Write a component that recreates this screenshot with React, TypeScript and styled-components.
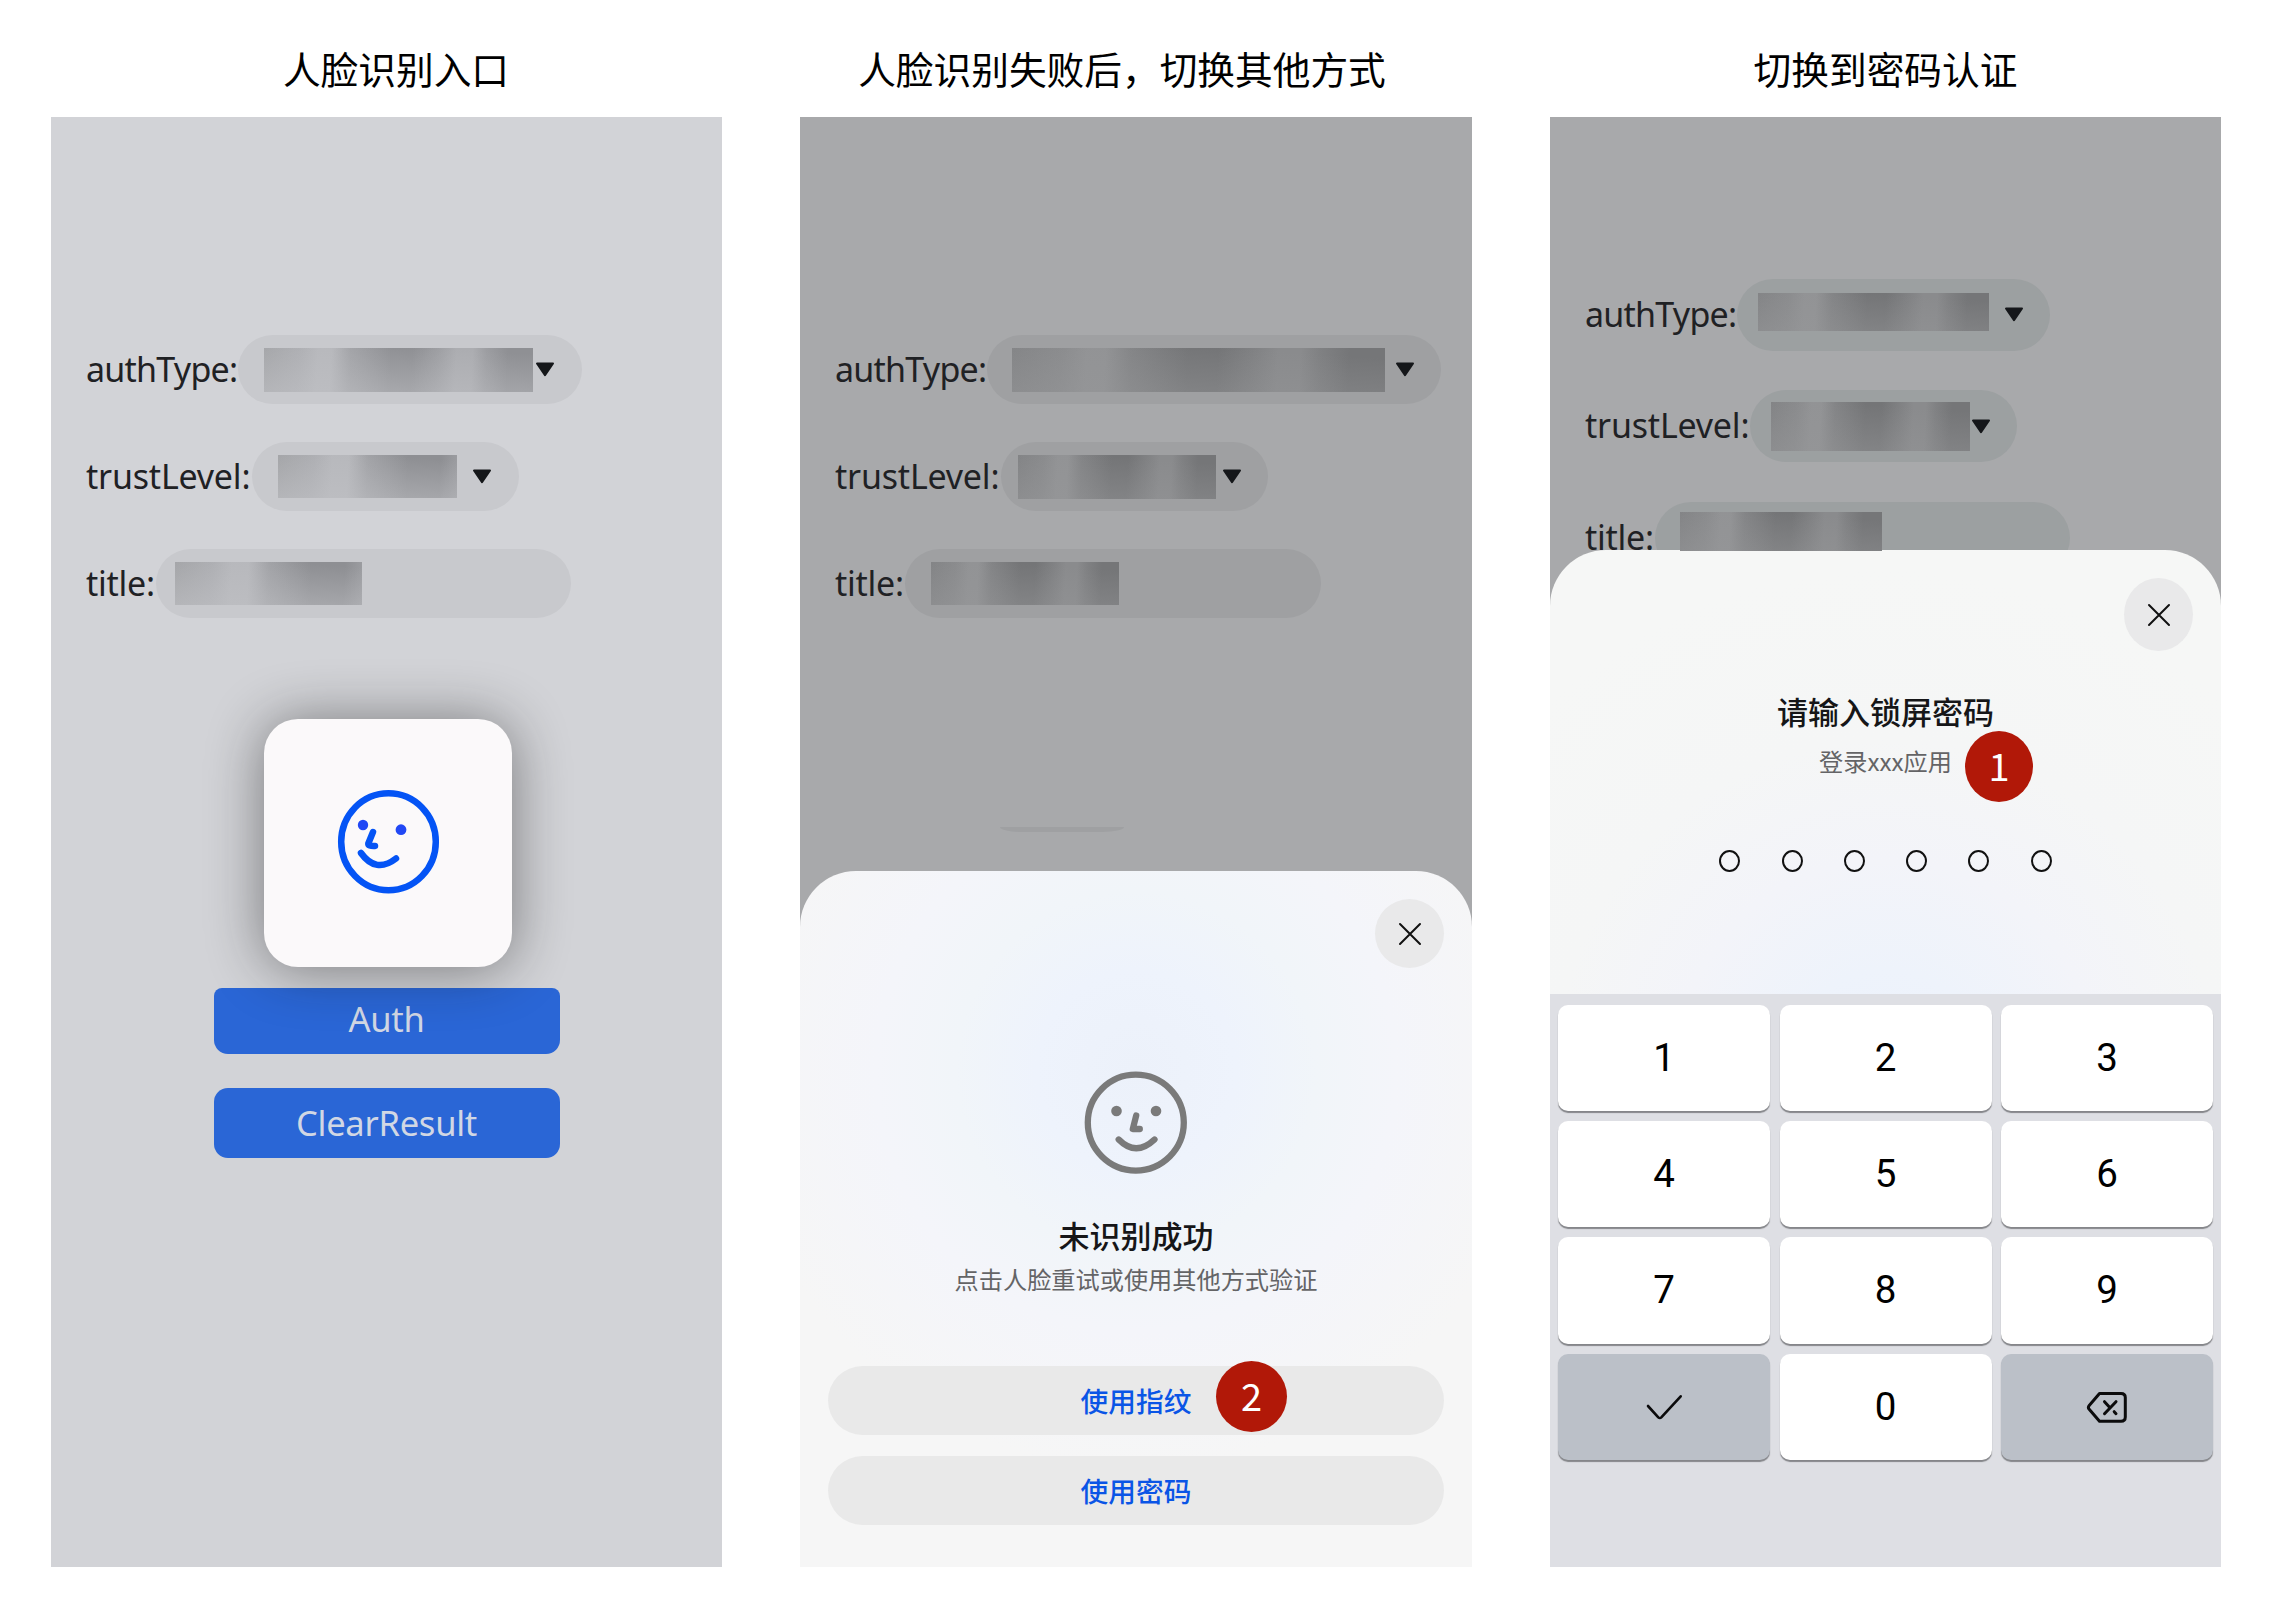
import React from "react";
import styled, { createGlobalStyle } from "styled-components";

const GlobalStyle = createGlobalStyle`
  * { box-sizing: border-box; }
  body { margin: 0; background: #fff; }
`;

const latin = `"Noto Sans", "Noto Sans CJK SC", sans-serif`;
const cjk = `"Noto Sans CJK SC", "Noto Sans", sans-serif`;

const Page = styled.main`
  width: 2283px;
  height: 1613px;
  padding: 0 62px 0 51px;
  display: flex;
  justify-content: space-between;
  background: #fff;
  overflow: hidden;
  font-family: ${latin};
`;

const Column = styled.section<{ $w: number }>`
  width: ${(p) => p.$w}px;
  display: flex;
  flex-direction: column;
`;

const Heading = styled.h2<{ $shift?: number }>`
  margin: 0;
  height: 117px;
  padding-top: 22px;
  padding-left: ${(p) => Math.max(0, p.$shift ?? 0)}px;
  padding-right: ${(p) => Math.max(0, -(p.$shift ?? 0))}px;
  font: 400 37.7px/92px ${cjk};
  color: #000;
  text-align: center;
  white-space: nowrap;
`;

const Phone = styled.div<{ $bg: string }>`
  position: relative;
  width: 100%;
  height: 1450px;
  display: flex;
  flex-direction: column;
  background: ${(p) => p.$bg};
  overflow: hidden;
`;

const Form = styled.div<{ $top: number; $gap: number; $height: number }>`
  height: ${(p) => p.$height}px;
  flex: none;
  padding: ${(p) => p.$top}px 0 0 35px;
  display: flex;
  flex-direction: column;
  gap: ${(p) => p.$gap}px;
`;

const Row = styled.div`
  display: flex;
  align-items: center;
`;

const Label = styled.span<{ $w: number; $ls: number }>`
  flex: none;
  width: ${(p) => p.$w}px;
  padding-bottom: 2px;
  font-size: 34px;
  line-height: 66px;
  letter-spacing: ${(p) => p.$ls}px;
  color: #1f2124;
  white-space: nowrap;
`;

const Pill = styled.div<{ $w: number; $h: number; $pad: number; $bg: string }>`
  flex: none;
  width: ${(p) => p.$w}px;
  height: ${(p) => p.$h}px;
  padding-left: ${(p) => p.$pad}px;
  display: flex;
  align-items: center;
  border-radius: 36px;
  background: ${(p) => p.$bg};
`;

const Mosaic = styled.div<{ $w: number; $h: number; $up: number; $dark: boolean; $wide: boolean }>`
  position: relative;
  z-index: 2;
  flex: none;
  width: ${(p) => p.$w}px;
  height: ${(p) => p.$h}px;
  margin-bottom: ${(p) => p.$up}px;
  background: ${(p) => {
    const shade = p.$dark
      ? "linear-gradient(4deg, rgba(150,151,153,.5), rgba(150,151,153,0) 85%)"
      : "linear-gradient(4deg, rgba(192,193,197,.6), rgba(192,193,197,0) 90%)";
    const c = p.$dark
      ? ["#828385", "#8a8b8d", "#929395", "#838486", "#747577", "#808183", "#8a8b8d", "#757678"]
      : ["#a2a3a6", "#adaeb2", "#b7b8bc", "#a1a2a6", "#8e8f93", "#9d9ea2", "#acadb1", "#8f9094"];
    return p.$wide
      ? `${shade}, linear-gradient(93deg, ${c[0]} 0%, ${c[1]} 13%, ${c[2]} 20%, ${c[2]} 25%, ${c[3]} 32%, ${c[4]} 47%, ${c[4]} 55%, ${c[5]} 64%, ${c[6]} 71%, ${c[6]} 77%, ${c[5]} 82%, ${c[7]} 90%, ${c[7]} 100%)`
      : `${shade}, linear-gradient(93deg, ${c[0]} 0%, ${c[1]} 20%, ${c[2]} 30%, ${c[2]} 39%, ${c[3]} 50%, ${c[4]} 72%, ${c[4]} 90%, ${c[5]} 100%)`;
  }};
`;

const Arrow = styled.svg<{ $gap: number }>`
  flex: none;
  width: 20px;
  height: 15px;
  margin-left: ${(p) => p.$gap}px;
`;

type Field = { label: string; lw: number; ls: number; w: number; pad: number; mw: number; mh: number; up?: number; arrow?: number; wide?: boolean };

function Fields({ items, dark, h, bg }: { items: Field[]; dark: boolean; h: number; bg: string }) {
  return (
    <>
      {items.map((f) => (
        <Row key={f.label}>
          <Label $w={f.lw} $ls={f.ls}>{f.label}</Label>
          <Pill $w={f.w} $h={h} $pad={f.pad} $bg={bg}>
            <Mosaic $w={f.mw} $h={f.mh} $up={f.up ?? 0} $dark={dark} $wide={dark || !!f.wide} />
            {f.arrow !== undefined && (
              <Arrow $gap={f.arrow} viewBox="0 0 20 15">
                <path d="M2 1.5 H18 L10 13.2 Z" fill="#15171a" stroke="#15171a" strokeWidth="2" strokeLinejoin="round" />
              </Arrow>
            )}
          </Pill>
        </Row>
      ))}
    </>
  );
}

const FaceCard = styled.div`
  position: relative;
  z-index: 1;
  flex: none;
  width: 248px;
  height: 248px;
  margin: 0 0 21px 213px;
  display: grid;
  place-items: center;
  border-radius: 34px;
  background: #fbf9fa;
  box-shadow: 0 2px 56px rgba(20, 20, 20, 0.48);
`;

const FaceSvg = styled.svg<{ $mt?: number }>`
  display: block;
  flex: none;
  width: 108px;
  height: 108px;
  margin-top: ${(p) => p.$mt ?? 0}px;
`;

const ActionButton = styled.button<{ $cut?: boolean }>`
  flex: none;
  width: 346px;
  height: ${(p) => (p.$cut ? 66 : 70)}px;
  margin: 0 0 34px 162.5px;
  padding: 0 0 ${(p) => (p.$cut ? 5 : 1)}px;
  border: 0;
  border-radius: ${(p) => (p.$cut ? "8px 8px 14px 14px" : "14px")};
  background: #2a66d6;
  color: #d1d7e4;
  font: 400 34.5px/60px ${latin};
  letter-spacing: -0.25px;
`;

const Sheet = styled.div<{ $bg: string }>`
  position: relative;
  flex: 1;
  display: flex;
  flex-direction: column;
  align-items: center;
  border-radius: 56px 56px 0 0;
  background: ${(p) => p.$bg};
`;

const Close = styled.button<{ $h: number; $top: number; $right: number }>`
  flex: none;
  align-self: flex-end;
  width: 69px;
  height: ${(p) => p.$h}px;
  margin: ${(p) => p.$top}px ${(p) => p.$right}px 0 0;
  padding: 0;
  display: grid;
  place-items: center;
  border: 0;
  border-radius: 50%;
  background: #e9e9ea;
`;

const CloseIcon = () => (
  <svg width="24" height="24" viewBox="0 0 24 24" fill="none" stroke="#111" strokeWidth="2" strokeLinecap="round">
    <path d="M2 2 L22 22 M22 2 L2 22" />
  </svg>
);

const Title = styled.h3<{ $mt: number }>`
  margin: ${(p) => p.$mt}px 0 0;
  font: 500 31px/44px ${cjk};
  color: #161618;
  white-space: nowrap;
`;

const Sub = styled.p<{ $mt: number }>`
  margin: ${(p) => p.$mt}px 0 0;
  font: 400 24.2px/36px ${cjk};
  color: #646466;
  white-space: nowrap;
`;

const Remnant = styled.div`
  width: 124px;
  height: 5px;
  margin-top: auto;
  margin-bottom: 39px;
  margin-left: 165px;
  border-radius: 0 0 22px 22px / 0 0 5px 5px;
  background: #9fa0a2;
`;

const Option = styled.button<{ $mt: number }>`
  position: relative;
  flex: none;
  width: 616px;
  height: 69px;
  margin: ${(p) => p.$mt}px 0 0;
  padding: 0 0 2px;
  border: 0;
  border-radius: 35px;
  background: #e9e9e9;
  color: #0a55e6;
  font: 500 27.7px/64px ${cjk};
`;

const Badge = styled.span<{ $x: number; $y: number; $w: number }>`
  position: absolute;
  left: ${(p) => p.$x}px;
  top: ${(p) => p.$y}px;
  width: ${(p) => p.$w}px;
  height: 71px;
  border-radius: 50%;
  background: #b11808;
  color: #fff;
  font: 400 38px/68px ${cjk};
  text-align: center;
`;

const Dots = styled.div`
  display: flex;
  gap: 41.3px;
  margin-top: 71px;
`;

const Dot = styled.i`
  width: 21px;
  height: 22px;
  border: 2px solid #111;
  border-radius: 50%;
`;

const Keypad = styled.div`
  flex: none;
  height: 573px;
  padding: 10.5px 8px 0;
  display: grid;
  grid-template-columns: repeat(3, 1fr);
  grid-auto-rows: 106.4px;
  align-content: start;
  gap: 10px 9.5px;
  background: #dedfe4;
`;

const Key = styled.button<{ $alt?: boolean }>`
  padding: 0;
  display: grid;
  place-items: center;
  border: 0;
  border-radius: 10px;
  background: ${(p) => (p.$alt ? "#bbc0c8" : "#fff")};
  box-shadow: 0 2px 1px #85868a;
  color: #000;
  font: 400 38.5px/100px Roboto, sans-serif;
`;

const Gray = "#7a7a7a";

export default function App() {
  return (
    <>
      <GlobalStyle />
      <Page>
        <Column $w={671}>
          <Heading $shift={19}>人脸识别入口</Heading>
          <Phone $bg="#d2d3d7">
            <Form $top={218} $gap={38} $height={602}>
              <Fields
                dark={false}
                h={69}
                bg="#c8c9cd"
                items={[
                  { label: "authType:", lw: 152, ls: -0.75, w: 344, pad: 26, mw: 269, mh: 44, arrow: 2, wide: true },
                  { label: "trustLevel:", lw: 165.5, ls: -0.2, w: 267, pad: 26.5, mw: 179, mh: 43, arrow: 15 },
                  { label: "title:", lw: 70, ls: -0.25, w: 415, pad: 19, mw: 187, mh: 43 },
                ]}
              />
            </Form>
            <FaceCard>
              <FaceSvg viewBox="0 0 108 108" fill="none" stroke="#0454f5" strokeWidth="6.5" strokeLinecap="round" strokeLinejoin="round">
                <ellipse cx="54.5" cy="52.7" rx="47.3" ry="48.5" />
                <circle cx="29" cy="36" r="5.2" fill="#2148f5" stroke="none" />
                <circle cx="67" cy="40.7" r="5.4" fill="#2148f5" stroke="none" />
                <path d="M39 43 L34.3 54.5 Q34 57.3 41 57" />
                <path d="M27 64 Q42 85 62 69.5" />
              </FaceSvg>
            </FaceCard>
            <ActionButton $cut>Auth</ActionButton>
            <ActionButton>ClearResult</ActionButton>
          </Phone>
        </Column>

        <Column $w={672}>
          <Heading $shift={-28}>人脸识别失败后，切换其他方式</Heading>
          <Phone $bg="#a8a9ab">
            <Form $top={218} $gap={38} $height={754}>
              <Fields
                dark
                h={69}
                bg="#9fa0a2"
                items={[
                  { label: "authType:", lw: 152, ls: -0.75, w: 454, pad: 25, mw: 373, mh: 44, arrow: 10 },
                  { label: "trustLevel:", lw: 166, ls: -0.2, w: 267, pad: 17, mw: 198, mh: 44, arrow: 6 },
                  { label: "title:", lw: 70, ls: -0.25, w: 416, pad: 26, mw: 188, mh: 43 },
                ]}
              />
              <Remnant />
            </Form>
            <Sheet $bg="radial-gradient(circle at 336px 200px, #ecf1fa 0, #eef3fc 100px, #f1f5f9 180px, #f4f5fa 260px, #f6f6f6 400px)">
              <Close $h={69} $top={28} $right={28}><CloseIcon /></Close>
              <FaceSvg $mt={101} viewBox="0 0 108 108" fill="none" stroke={Gray} strokeWidth="6.3" strokeLinecap="round" strokeLinejoin="round">
                <circle cx="53.8" cy="53.6" r="48" />
                <circle cx="34.5" cy="42" r="5.3" fill={Gray} stroke="none" />
                <circle cx="74" cy="42" r="5.3" fill={Gray} stroke="none" />
                <path d="M54.2 46.5 L50.8 60 H57.8" />
                <path d="M36.7 70.5 Q54 88 72.5 70.5" />
              </FaceSvg>
              <Title $mt={36}>未识别成功</Title>
              <Sub $mt={4}>点击人脸重试或使用其他方式验证</Sub>
              <Option $mt={69}>
                使用指纹
                <Badge $x={388} $y={-5} $w={71}>2</Badge>
              </Option>
              <Option $mt={21}>使用密码</Option>
            </Sheet>
          </Phone>
        </Column>

        <Column $w={671}>
          <Heading>切换到密码认证</Heading>
          <Phone $bg="#a8a9ab">
            <Form $top={161.5} $gap={39.8} $height={432.5}>
              <Fields
                dark
                h={72}
                bg="#9ca0a1"
                items={[
                  { label: "authType:", lw: 152, ls: -0.75, w: 313, pad: 21, mw: 231, mh: 38, up: 6, arrow: 15 },
                  { label: "trustLevel:", lw: 165, ls: -0.2, w: 267, pad: 21, mw: 199, mh: 49, arrow: 1 },
                  { label: "title:", lw: 70, ls: -0.25, w: 415, pad: 25, mw: 202, mh: 39, up: 13 },
                ]}
              />
            </Form>
            <Sheet $bg="radial-gradient(circle at 336px 520px, #ecf1fb 0, #eef3fb 100px, #f3f4f9 210px, #f5f6f6 330px, #f6f7f6 500px)">
              <Close $h={73} $top={28.5} $right={28}><CloseIcon /></Close>
              <Title $mt={37.5}>请输入锁屏密码</Title>
              <Sub $mt={10}>登录xxx应用</Sub>
              <Badge $x={415} $y={181.5} $w={68}>1</Badge>
              <Dots>
                {[0, 1, 2, 3, 4, 5].map((i) => <Dot key={i} />)}
              </Dots>
            </Sheet>
            <Keypad>
              {["1", "2", "3", "4", "5", "6", "7", "8", "9"].map((n) => <Key key={n}>{n}</Key>)}
              <Key $alt>
                <svg width="38" height="28" viewBox="0 0 38 28" fill="none" stroke="#0b0b0c" strokeWidth="2.6" strokeLinecap="round" strokeLinejoin="round">
                  <path d="M3 13 L13.3 24.3 Q14.8 25.8 16.3 24.3 L35.7 3.3" />
                </svg>
              </Key>
              <Key>0</Key>
              <Key $alt>
                <svg width="42" height="34" viewBox="0 0 42 34" fill="none" stroke="#0b0b0c" strokeWidth="3" strokeLinecap="round" strokeLinejoin="round">
                  <path d="M13.5 3.5 H35 Q39.3 3.5 39.3 7.5 V27 Q39.3 31.3 35 31.3 H13.5 L3.2 19.2 Q1.6 17.4 3.2 15.6 Z" />
                  <path d="M18.5 11.7 L24 17.7 M30 11.7 L18.5 23.7 M28.2 21.7 L30 23.7" />
                </svg>
              </Key>
            </Keypad>
          </Phone>
        </Column>
      </Page>
    </>
  );
}
